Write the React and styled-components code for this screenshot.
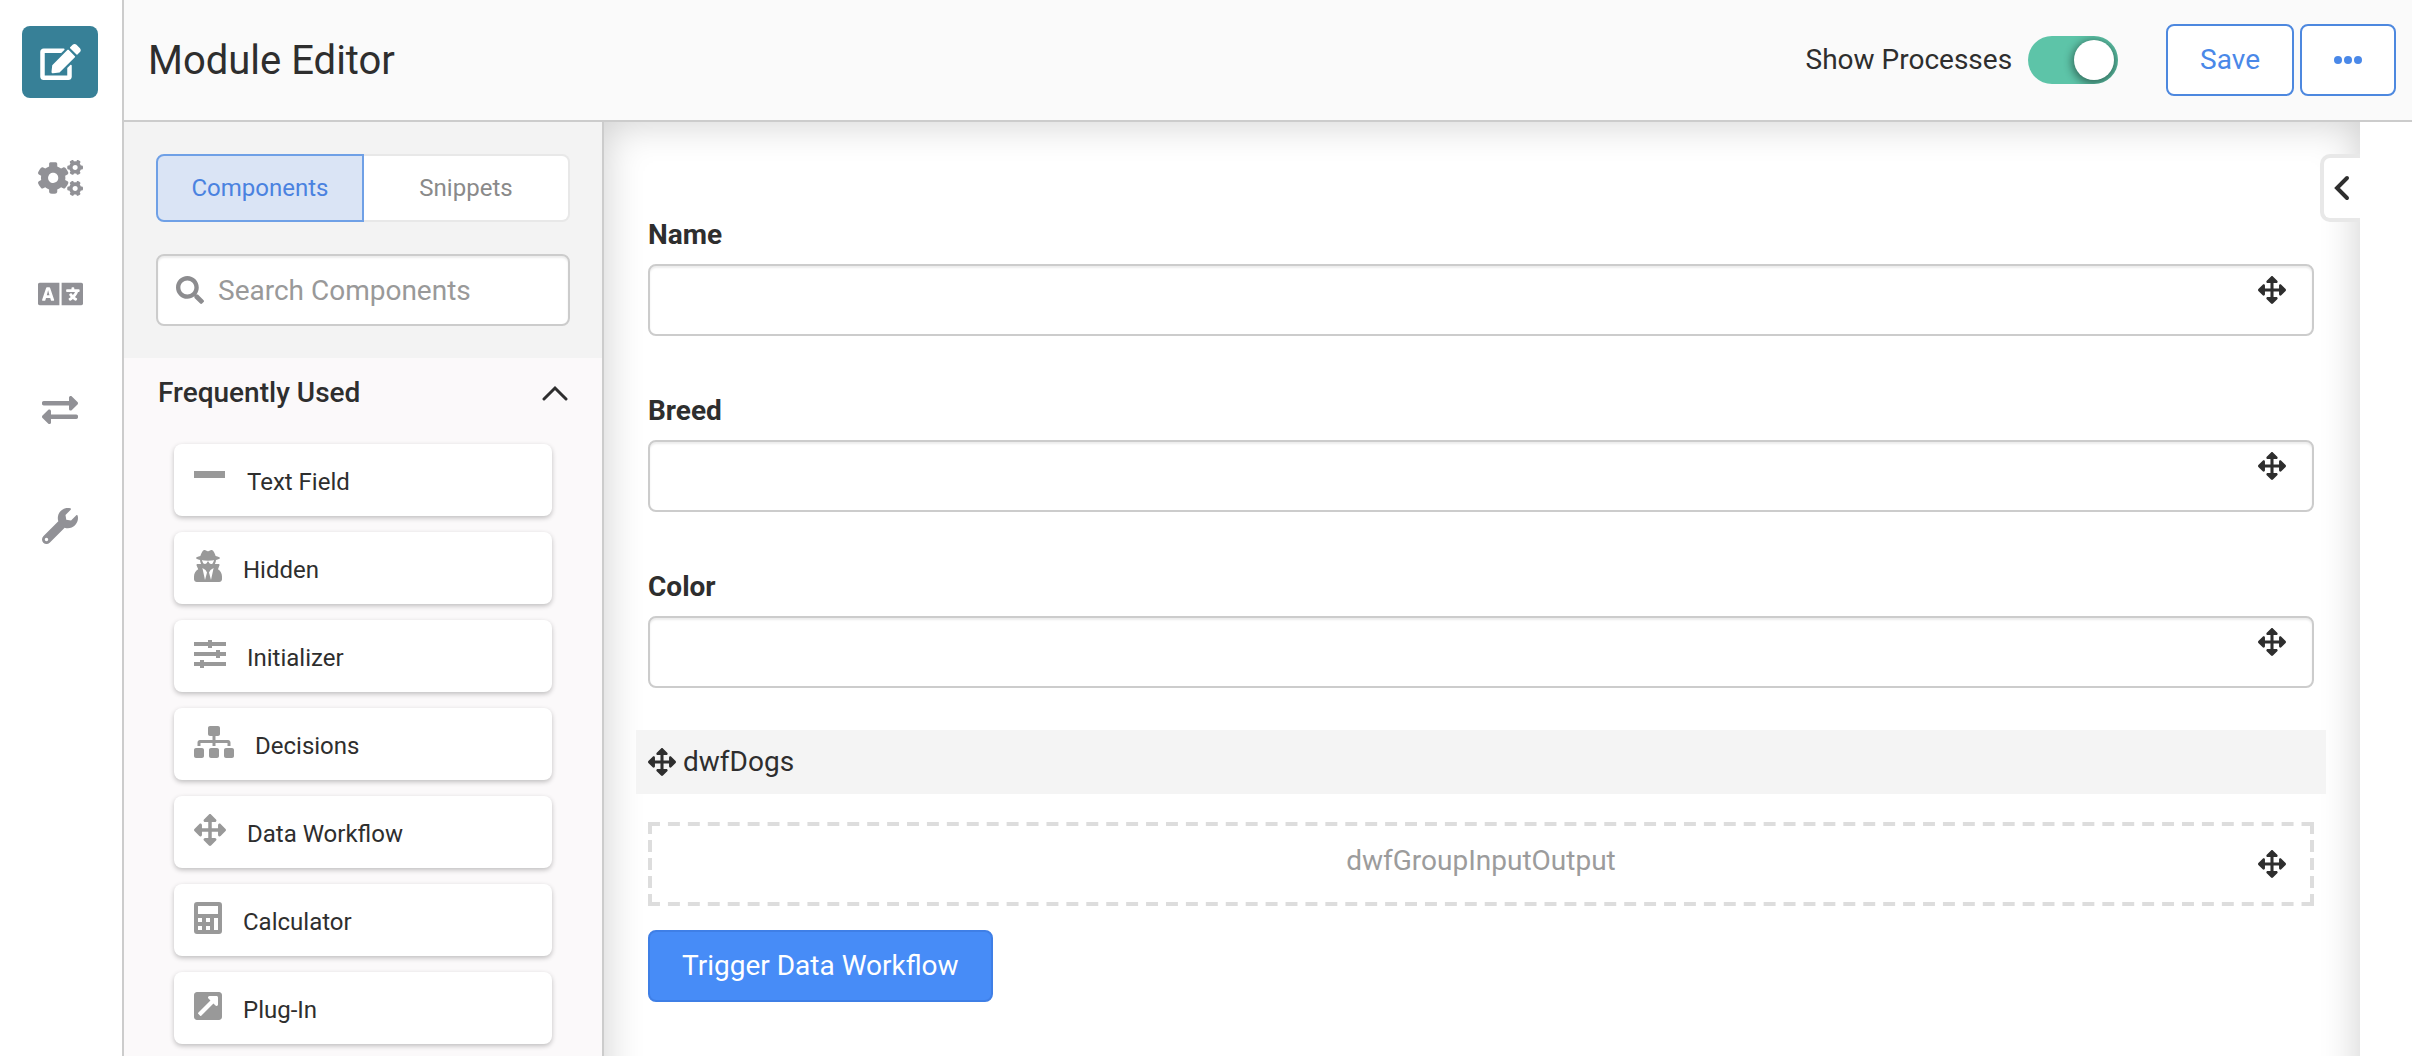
import React, { useState } from 'react';
import styled, { createGlobalStyle } from 'styled-components';
import {
  FaEdit,
  FaCogs,
  FaLanguage,
  FaExchangeAlt,
  FaWrench,
  FaSearch,
  FaUserSecret,
  FaSitemap,
  FaArrowsAlt,
  FaExternalLinkSquareAlt
} from 'react-icons/fa';

const GlobalStyle = createGlobalStyle`
  *, *::before, *::after {
    box-sizing: border-box;
  }
  body {
    margin: 0;
    background: #fff;
    color: #2e2e2e;
    font-family: Roboto, "Liberation Sans", sans-serif;
    font-size: 28px;
    line-height: 38px;
  }
  button, input {
    font: inherit;
    color: inherit;
  }
  svg {
    display: block;
    flex-shrink: 0;
  }
`;

const Page = styled.div`
  display: flex;
  height: 100vh;
  overflow: hidden;
`;

const Rail = styled.nav`
  display: flex;
  flex-direction: column;
  gap: 44px;
  flex: 0 0 124px;
  padding: 26px 0 0 22px;
  border-right: 2px solid #cccccc;
`;

const RailButton = styled.button`
  display: flex;
  align-items: center;
  justify-content: center;
  width: 76px;
  height: 72px;
  padding: 0;
  border: 0;
  border-radius: 8px;
  background: ${props => props.$active ? '#378097' : 'transparent'};
  color: ${props => props.$active ? '#fff' : '#919196'};

  svg {
    width: ${props => props.$iconWidth}px;
    height: 36px;
  }
`;

const Main = styled.div`
  display: flex;
  flex-direction: column;
  flex: 1;
  min-width: 0;
`;

const Header = styled.header`
  display: flex;
  align-items: center;
  flex: 0 0 122px;
  padding: 0 16px 0 24px;
  border-bottom: 2px solid #cccccc;
  background: #fafafa;
`;

const Title = styled.h1`
  flex: 1;
  margin: 0;
  padding-top: 2px;
  font-size: 40px;
  font-weight: 400;
  line-height: 48px;
`;

const SwitchLabel = styled.label`
  display: flex;
  align-items: center;
  gap: 16px;
  margin-right: 48px;
`;

const Switch = styled.input`
  appearance: none;
  width: 90px;
  height: 48px;
  margin: 0;
  padding: 4px;
  border-radius: 24px;
  background: ${props => props.checked ? '#5dc4a8' : '#cccccc'};
  overflow: hidden;

  &::before {
    content: '';
    display: block;
    width: 40px;
    height: 40px;
    margin-left: ${props => props.checked ? 'auto' : '0'};
    border-radius: 50%;
    background: #fff;
    box-shadow: 0 2px 8px 2px rgba(0, 0, 0, 0.45);
  }
`;

const HeaderButtons = styled.div`
  display: flex;
  gap: 6px;
`;

const OutlineButton = styled.button`
  display: flex;
  align-items: center;
  justify-content: center;
  height: 72px;
  padding: 0 32px;
  border: 2px solid #4d88df;
  border-radius: 8px;
  background: #fff;
  color: #4a88e8;
`;

const Body = styled.div`
  display: flex;
  flex: 1;
  min-height: 0;
  overflow: hidden;
`;

const Sidebar = styled.aside`
  flex: 0 0 480px;
  border-right: 2px solid #cccccc;
  background: #fbf9fa;
  overflow: hidden;
`;

const SidebarTop = styled.div`
  display: flex;
  flex-direction: column;
  gap: 32px;
  padding: 32px;
  background: #f3f3f3;
`;

const Tabs = styled.div`
  display: flex;
`;

const Tab = styled.button`
  flex: 1;
  height: 68px;
  padding: 0;
  border: 2px solid ${props => props.$active ? '#6fa0e6' : '#e8e8e8'};
  border-left-width: ${props => props.$active ? '2px' : '0'};
  border-radius: ${props => props.$active ? '8px 0 0 8px' : '0 8px 8px 0'};
  background: ${props => props.$active ? '#dae4f5' : '#fff'};
  color: ${props => props.$active ? '#4a82e0' : '#8a8a8a'};
  font-size: 24px;
`;

const SearchBox = styled.label`
  display: flex;
  align-items: center;
  gap: 14px;
  height: 72px;
  padding: 0 18px;
  border: 2px solid #cccccc;
  border-radius: 8px;
  background: #fff;
  box-shadow: inset 0 2px 2px rgba(0, 0, 0, 0.08);
  color: #8c8c8f;
`;

const SearchInput = styled.input`
  flex: 1;
  min-width: 0;
  padding: 2px 0 0;
  border: 0;
  outline: 0;
  background: transparent;
  color: #2e2e2e;

  &::placeholder {
    color: #999;
    opacity: 1;
  }
`;

const GroupHeader = styled.button`
  display: flex;
  align-items: center;
  justify-content: space-between;
  width: 100%;
  height: 70px;
  padding: 0 34px;
  border: 0;
  background: transparent;
  font-weight: 500;
`;

const CardList = styled.ul`
  display: flex;
  flex-direction: column;
  gap: 16px;
  margin: 0;
  padding: 16px 50px;
  list-style: none;
`;

const Card = styled.li`
  display: flex;
  align-items: center;
  gap: 21px;
  height: 72px;
  padding: 4px 20px 0;
  border-radius: 8px;
  background: #fff;
  box-shadow: 0 2px 5px rgba(0, 0, 0, 0.24);
  font-size: 24px;
  cursor: grab;

  svg {
    width: ${props => props.$iconWidth}px;
    height: 32px;
    margin-bottom: 8px;
    color: #999;
  }
`;

/* runs past the bottom edge so the inner shadow only shows on three sides */
const Canvas = styled.main`
  position: relative;
  flex: 1;
  min-width: 0;
  margin: 0 52px -60px 0;
  padding: 94px 46px 0 44px;
  box-shadow: inset 0 0 40px rgba(0, 0, 0, 0.2);
`;

const PanelToggle = styled.button`
  position: absolute;
  top: 32px;
  right: 0;
  display: flex;
  align-items: center;
  width: 40px;
  height: 68px;
  padding: 0 0 0 10px;
  border: 4px solid #e8e8e8;
  border-right: 0;
  border-radius: 10px 0 0 10px;
  background: #fff;
`;

const FieldList = styled.div`
  display: flex;
  flex-direction: column;
  gap: 56px;
`;

const FieldLabel = styled.label`
  display: block;
  height: 48px;
  font-weight: 700;
`;

const FieldControl = styled.div`
  position: relative;
`;

const TextInput = styled.input`
  display: block;
  width: 100%;
  height: 72px;
  padding: 0 72px 0 20px;
  border: 2px solid #cccccc;
  border-radius: 8px;
  outline: 0;
  background: #fff;
  box-shadow: inset 0 2px 2px rgba(0, 0, 0, 0.08);
`;

const DragHandle = styled.span`
  position: absolute;
  top: ${props => props.$top}px;
  right: ${props => props.$right}px;
  color: #2e2e2e;
  cursor: move;
`;

const WorkflowBar = styled.div`
  display: flex;
  align-items: center;
  gap: 7px;
  height: 64px;
  margin: 42px -12px 28px;
  padding: 0 12px;
  background: #f4f4f4;
`;

const dashX = 'linear-gradient(90deg, #ddd 30%, transparent 30% 70%, #ddd 70%)';
const dashY = 'linear-gradient(#ddd 33%, transparent 33% 67%, #ddd 67%)';

/* dashes are longer than a dashed border gives, so they are painted as tiles */
const DropZone = styled.div`
  position: relative;
  height: 84px;
  padding-top: 14px;
  border: 6px solid transparent;
  background:
    ${dashX} 0 -6px / 20px 4px round no-repeat,
    ${dashX} 0 calc(100% + 6px) / 20px 4px round no-repeat,
    ${dashY} -6px 0 / 4px 18px no-repeat round,
    ${dashY} calc(100% + 6px) 0 / 4px 18px no-repeat round;
  background-origin: padding-box;
  background-clip: border-box;
  color: #9c9c9c;
  text-align: center;
`;

const TriggerButton = styled.button`
  height: 72px;
  margin-top: 24px;
  padding: 0 32px;
  border: 2px solid #3f7fe6;
  border-radius: 8px;
  background: #478cf7;
  color: #fff;
`;

const LineIcon = () => (
  <svg viewBox="0 0 32 32" fill="currentColor" aria-hidden="true">
    <path d="M0 9h31v7H0z" />
  </svg>
);

const SlidersIcon = () => (
  <svg viewBox="0 0 32 32" fill="currentColor" aria-hidden="true">
    <path d="M0 4h14V2h4v2h14v4H18v2h-4V8H0zM0 14h22v-2h4v2h6v4h-6v2h-4v-2H0zM0 24h6v-2h4v2h22v4H10v2H6v-2H0z" />
  </svg>
);

const CalculatorIcon = () => (
  <svg viewBox="0 0 28 32" fill="currentColor" aria-hidden="true">
    <path
      fillRule="evenodd"
      d="M3 0h22a3 3 0 0 1 3 3v26a3 3 0 0 1-3 3H3a3 3 0 0 1-3-3V3a3 3 0 0 1 3-3zM4 4v8h20V4zM4 16v4h4v-4zM12 16v4h4v-4zM20 16v12h4V16zM4 24v4h4v-4zM12 24v4h4v-4z"
    />
  </svg>
);

const ChevronUp = () => (
  <svg width="26" height="16" viewBox="0 0 26 16" fill="none" stroke="currentColor" strokeWidth="3" strokeLinecap="round" aria-hidden="true">
    <path d="M2 14L13 3l11 11" />
  </svg>
);

const ChevronLeft = () => (
  <svg width="16" height="26" viewBox="0 0 16 26" fill="none" stroke="currentColor" strokeWidth="4" strokeLinecap="round" aria-hidden="true">
    <path d="M13 3L3 13l10 10" />
  </svg>
);

const DotsIcon = () => (
  <svg width="28" height="8" viewBox="0 0 28 8" fill="currentColor" aria-hidden="true">
    <circle cx="4" cy="4" r="4" />
    <circle cx="14" cy="4" r="4" />
    <circle cx="24" cy="4" r="4" />
  </svg>
);

const railItems = [
  { label: 'Editor', Icon: FaEdit, width: 41 },
  { label: 'Settings', Icon: FaCogs, width: 45 },
  { label: 'Translations', Icon: FaLanguage, width: 45 },
  { label: 'Transfer', Icon: FaExchangeAlt, width: 36 },
  { label: 'Tools', Icon: FaWrench, width: 36 }
];

const components = [
  { name: 'Text Field', Icon: LineIcon, width: 32 },
  { name: 'Hidden', Icon: FaUserSecret, width: 28 },
  { name: 'Initializer', Icon: SlidersIcon, width: 32 },
  { name: 'Decisions', Icon: FaSitemap, width: 40 },
  { name: 'Data Workflow', Icon: FaArrowsAlt, width: 32 },
  { name: 'Calculator', Icon: CalculatorIcon, width: 28 },
  { name: 'Plug-In', Icon: FaExternalLinkSquareAlt, width: 28 }
];

const fields = ['Name', 'Breed', 'Color'];

function App() {
  const [tab, setTab] = useState('Components');
  const [showProcesses, setShowProcesses] = useState(true);

  return (
    <Page>
      <GlobalStyle />
      <Rail>
        {railItems.map(({ label, Icon, width }, i) => (
          <RailButton key={label} type="button" aria-label={label} $active={i === 0} $iconWidth={width}>
            <Icon />
          </RailButton>
        ))}
      </Rail>
      <Main>
        <Header>
          <Title>Module Editor</Title>
          <SwitchLabel>
            Show Processes
            <Switch
              type="checkbox"
              checked={showProcesses}
              onChange={e => setShowProcesses(e.target.checked)}
            />
          </SwitchLabel>
          <HeaderButtons>
            <OutlineButton type="button">Save</OutlineButton>
            <OutlineButton type="button" aria-label="More">
              <DotsIcon />
            </OutlineButton>
          </HeaderButtons>
        </Header>
        <Body>
          <Sidebar>
            <SidebarTop>
              <Tabs>
                {['Components', 'Snippets'].map(name => (
                  <Tab key={name} type="button" $active={tab === name} onClick={() => setTab(name)}>
                    {name}
                  </Tab>
                ))}
              </Tabs>
              <SearchBox>
                <FaSearch size={28} />
                <SearchInput type="text" placeholder="Search Components" aria-label="Search Components" />
              </SearchBox>
            </SidebarTop>
            <GroupHeader type="button">
              Frequently Used
              <ChevronUp />
            </GroupHeader>
            <CardList>
              {components.map(({ name, Icon, width }) => (
                <Card key={name} $iconWidth={width}>
                  <Icon />
                  {name}
                </Card>
              ))}
            </CardList>
          </Sidebar>
          <Canvas>
            <PanelToggle type="button" aria-label="Open panel">
              <ChevronLeft />
            </PanelToggle>
            <FieldList>
              {fields.map(name => (
                <div key={name}>
                  <FieldLabel htmlFor={name}>{name}</FieldLabel>
                  <FieldControl>
                    <TextInput id={name} type="text" />
                    <DragHandle $top={12} $right={28}>
                      <FaArrowsAlt size={28} />
                    </DragHandle>
                  </FieldControl>
                </div>
              ))}
            </FieldList>
            <WorkflowBar>
              <FaArrowsAlt size={28} />
              dwfDogs
            </WorkflowBar>
            <DropZone>
              dwfGroupInputOutput
              <DragHandle $top={22} $right={22}>
                <FaArrowsAlt size={28} />
              </DragHandle>
            </DropZone>
            <TriggerButton type="button">Trigger Data Workflow</TriggerButton>
          </Canvas>
        </Body>
      </Main>
    </Page>
  );
}

export default App;
